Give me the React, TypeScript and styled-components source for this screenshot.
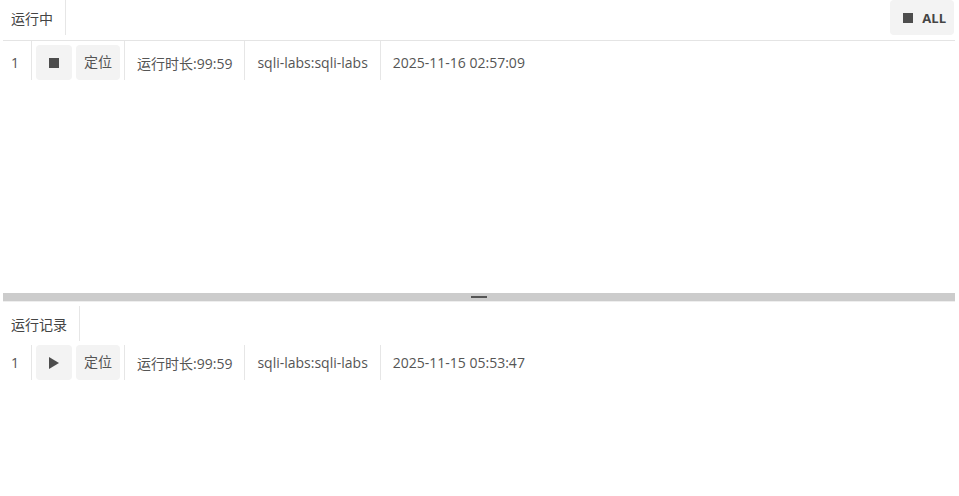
import React from "react";
import styled, { createGlobalStyle } from "styled-components";

const GlobalStyle = createGlobalStyle`
  html, body { margin: 0; padding: 0; background: #fff; }
  body {
    font-family: "Open Sans", "Noto Sans CJK SC", sans-serif;
    font-size: 14px;
    color: #555;
  }
  * { box-sizing: border-box; }
`;

const Page = styled.div`
  display: flex;
  flex-direction: column;
  height: 496px;
  padding: 0 4px 0 3px;
`;

const Panel = styled.section<{ $height?: number }>`
  display: flex;
  flex-direction: column;
  ${(p) => (p.$height ? `height: ${p.$height}px; flex: none;` : "flex: 1;")}
  overflow: hidden;
`;

const Header = styled.div<{ $bordered?: boolean; $offset?: number }>`
  display: flex;
  justify-content: space-between;
  align-items: flex-start;
  height: ${(p) => (p.$bordered ? 41 : 35)}px;
  margin-top: ${(p) => p.$offset ?? 0}px;
  border-bottom: ${(p) => (p.$bordered ? "1px solid #e4e4e4" : "none")};
`;

const Tab = styled.div<{ $h: number }>`
  display: flex;
  align-items: center;
  height: ${(p) => p.$h}px;
  padding: 0 12px 0 8px;
  border-right: 1px solid #e6e6e6;
  color: #444;
  font-size: 14px;
`;

const AllButton = styled.button`
  display: flex;
  align-items: center;
  gap: 9px;
  height: 35px;
  margin-right: 1px;
  padding: 0 8px 0 13px;
  border: none;
  border-radius: 4px;
  background: #f3f3f3;
  font-family: "Open Sans", sans-serif;
  font-weight: 700;
  font-size: 13px;
  color: #444;
`;

const StopSquare = styled.span`
  display: block;
  width: 10px;
  height: 10px;
  background: #4d4d4d;
`;

const Row = styled.div<{ $offset: number }>`
  display: flex;
  align-items: stretch;
  margin-top: ${(p) => p.$offset}px;
`;

const Cell = styled.div<{ $padL: number; $padR: number; $gap?: number; $pad: number; $last?: boolean }>`
  display: flex;
  align-items: center;
  gap: ${(p) => p.$gap ?? 0}px;
  height: ${(p) => 35 + p.$pad}px;
  padding: ${(p) => p.$pad}px ${(p) => p.$padR}px 0 ${(p) => p.$padL}px;
  border-right: ${(p) => (p.$last ? "none" : "1px solid #e6e6e6")};
  white-space: nowrap;
  color: #555;
`;

const IconButton = styled.button`
  display: flex;
  align-items: center;
  justify-content: center;
  width: 36px;
  height: 35px;
  padding: 0;
  border: none;
  border-radius: 4px;
  background: #f3f3f3;
`;

const TextButton = styled.button`
  display: flex;
  align-items: center;
  height: 35px;
  padding: 0 8px 2px;
  border: none;
  border-radius: 4px;
  background: #f3f3f3;
  font-family: "Open Sans", "Noto Sans CJK SC", sans-serif;
  font-size: 14px;
  line-height: 1;
  color: #555;
`;

const Splitter = styled.div`
  flex: none;
  height: 9px;
  background: #cccccc;
  border-bottom: 1px solid #eeeeee;
  display: flex;
  justify-content: center;
  align-items: center;
`;

const Grip = styled.span`
  display: block;
  width: 16px;
  height: 2px;
  background: #555;
`;

type Job = { idx: number; running: boolean; duration: string; name: string; time: string };

function JobRow({ job, pad, offset }: { job: Job; pad: number; offset: number }) {
  return (
    <Row $offset={offset}>
      <Cell $pad={pad} $padL={8} $padR={12}>
        {job.idx}
      </Cell>
      <Cell $pad={pad} $padL={4} $padR={4} $gap={4}>
        <IconButton aria-label={job.running ? "stop" : "start"}>
          {job.running ? (
            <StopSquare />
          ) : (
            <svg width="10" height="12" viewBox="0 0 10 12">
              <path d="M0 0 L10 6 L0 12 Z" fill="#4d4d4d" />
            </svg>
          )}
        </IconButton>
        <TextButton>定位</TextButton>
      </Cell>
      <Cell $pad={pad} $padL={12} $padR={12}>
        运行时长:{job.duration}
      </Cell>
      <Cell $pad={pad} $padL={12} $padR={12}>
        {job.name}
      </Cell>
      <Cell $pad={pad} $padL={12} $padR={0} $last>
        {job.time}
      </Cell>
    </Row>
  );
}

export default function App() {
  const running: Job = {
    idx: 1,
    running: true,
    duration: "99:59",
    name: "sqli-labs:sqli-labs",
    time: "2025-11-16 02:57:09",
  };
  const history: Job = {
    idx: 1,
    running: false,
    duration: "99:59",
    name: "sqli-labs:sqli-labs",
    time: "2025-11-15 05:53:47",
  };
  return (
    <>
      <GlobalStyle />
      <Page>
        <Panel $height={293}>
          <Header $bordered>
            <Tab $h={35}>运行中</Tab>
            <AllButton>
              <StopSquare />
              ALL
            </AllButton>
          </Header>
          <JobRow job={running} pad={4} offset={0} />
        </Panel>
        <Splitter>
          <Grip />
        </Splitter>
        <Panel>
          <Header $offset={4}>
            <Tab $h={35}>运行记录</Tab>
          </Header>
          <JobRow job={history} pad={0} offset={4} />
        </Panel>
      </Page>
    </>
  );
}
